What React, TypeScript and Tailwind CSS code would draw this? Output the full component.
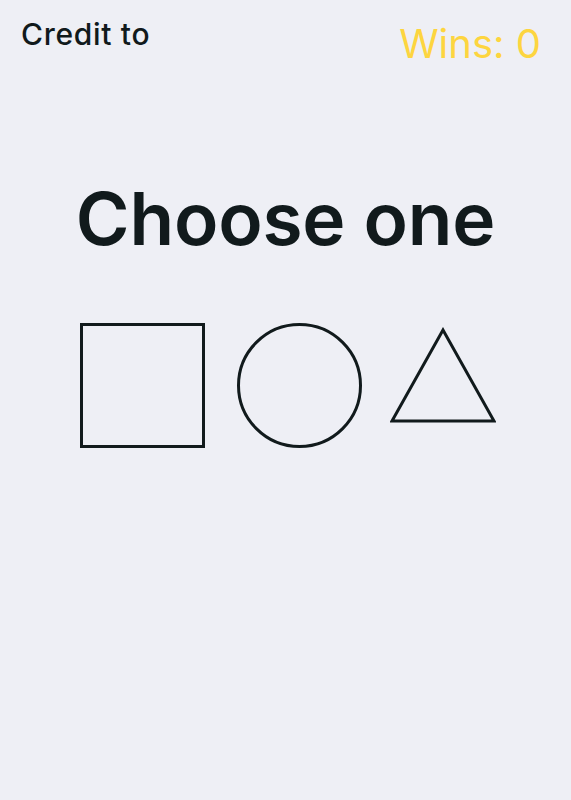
export default function App() {
    return (
        <div className="min-h-[800px] w-full bg-[#eeeff5] text-[#111a1c] font-['Inter',sans-serif]">
            <div className="flex items-start justify-between pl-[21px] pr-[30px] pt-[14px]">
                <div className="text-[30px] font-medium leading-[40px] tracking-[0.7px]">Credit to</div>
                <div className="mt-[6px] text-[40px] leading-[48px] text-[#fdd53f]">Wins: 0</div>
            </div>

            <h1 className="mt-[106px] text-center text-[73px] font-semibold leading-[90px] tracking-[-0.2px]">Choose one</h1>

            <div className="mt-[59px] flex items-center justify-center gap-[32px] pl-[4px]">
                <div className="h-[125px] w-[125px] border-[3px] border-[#111a1c]"></div>
                <div className="h-[125px] w-[125px] rounded-full border-[3px] border-[#111a1c]"></div>
                <svg width="106" height="96" viewBox="0 0 106 96" className="-ml-[4px] -mt-[22px]">
                    <polygon points="53,3 2,94 104,94" fill="none" stroke="#111a1c" strokeWidth="3" strokeLinejoin="miter" />
                </svg>
            </div>
        </div>
    );
}
